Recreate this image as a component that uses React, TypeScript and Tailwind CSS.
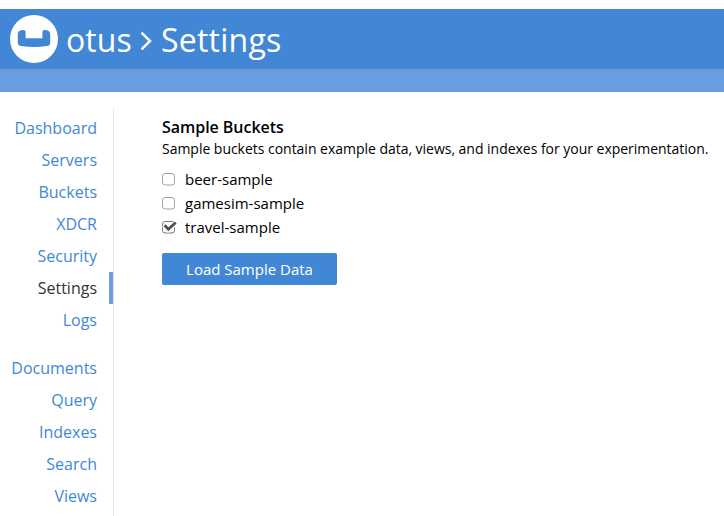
const primary = [
  { label: "Dashboard" },
  { label: "Servers" },
  { label: "Buckets" },
  { label: "XDCR" },
  { label: "Security" },
  { label: "Settings", active: true },
  { label: "Logs" },
];
const secondary = [
  { label: "Documents" },
  { label: "Query" },
  { label: "Indexes" },
  { label: "Search" },
  { label: "Views" },
];
const buckets = [
  { name: "beer-sample", checked: false },
  { name: "gamesim-sample", checked: false },
  { name: "travel-sample", checked: true },
];

function Logo() {
  return (
    <svg className="h-12 w-12 shrink-0" viewBox="0 0 48 48">
      <circle cx="24" cy="24" r="24" fill="#fff" />
      <path
        d="M11.300 15.200C8.900 15.600 7.800 17 7.800 19.200V27.400C7.800 29.600 8.900 30.700 11 31C19.500 32.200 28.500 32.200 37 31C39.100 30.700 40.200 29.600 40.200 27.400V19.200C40.200 17 39.100 15.600 36.700 15.200C34 14.900 32.400 15.500 32.400 16.900V23.200H15.600V16.900C15.600 15.500 14 14.900 11.300 15.200Z"
        fill="#4287d6"
      />
    </svg>
  );
}

function NavGroup({ items }: { items: { label: string; active?: boolean }[] }) {
  return (
    <ul>
      {items.map((item) => (
        <li
          key={item.label}
          className={
            item.active
              ? "h-8 border-r-4 border-[#689ee1] pr-3 text-right leading-8 text-[#333]"
              : "h-8 pr-4 text-right leading-8 text-[#4287d6]"
          }
        >
          {item.label}
        </li>
      ))}
    </ul>
  );
}

function Checkbox({ checked }: { checked: boolean }) {
  return (
    <svg className="h-4 w-4 shrink-0" viewBox="0 0 16 16" fill="none">
      <rect x="0.500" y="2.500" width="12" height="11.500" rx="2.500" stroke={checked ? "#777" : "#a3a3a3"} />
      {checked && <path d="M1.800 6l4.400 4.600 8.300-7.600" stroke="#fff" strokeWidth="5" />}
      {checked && <path d="M2.500 6.300l3.900 4 7.300-6.800" stroke="#505050" strokeWidth="2.800" />}
    </svg>
  );
}

export default function App() {
  return (
    <div className="flex h-[516px] w-[724px] flex-col overflow-hidden bg-white pt-[9px] font-['Open_Sans','Noto_Sans',sans-serif] text-black">
      <header className="flex h-[60px] shrink-0 items-center bg-[#4287d6] pl-[10px] text-white">
        <Logo />
        <h1 className="ml-2 flex items-center pt-px text-[32px] font-normal leading-[60px]">
          <span className="tracking-[0.100px]">otus</span>
          <svg className="ml-[7px] mr-2 mt-0.5 h-5 w-[14px]" viewBox="0 0 14 20" fill="none">
            <path d="M2.500 1.700L11 10l-8.500 8.300" stroke="#fff" strokeWidth="2.500" />
          </svg>
          <span className="tracking-[0.250px]">Settings</span>
        </h1>
      </header>
      <div className="h-[23px] shrink-0 bg-[#689ee1]" />
      <div className="flex min-h-0 flex-1 pt-4">
        <nav className="flex w-[114px] shrink-0 flex-col gap-4 border-r border-[#e6e6e6] pt-1 text-base">
          <NavGroup items={primary} />
          <NavGroup items={secondary} />
        </nav>
        <main className="pl-12 pt-2">
          <h2 className="text-base font-semibold leading-[22px] tracking-[-0.040px]">Sample Buckets</h2>
          <p className="whitespace-nowrap text-sm leading-[22px] tracking-[-0.025px]">
            Sample buckets contain example data, views, and indexes for your experimentation.
          </p>
          <ul className="mt-[7px]">
            {buckets.map((b) => (
              <li key={b.name} className="flex h-6 items-center text-[15px]">
                <Checkbox checked={b.checked} />
                <span className="ml-[7px]">{b.name}</span>
              </li>
            ))}
          </ul>
          <button className="mt-[14px] h-8 w-[175px] rounded-[2px] bg-[#4287d6] text-[15px] text-white">
            Load Sample Data
          </button>
        </main>
      </div>
    </div>
  );
}
